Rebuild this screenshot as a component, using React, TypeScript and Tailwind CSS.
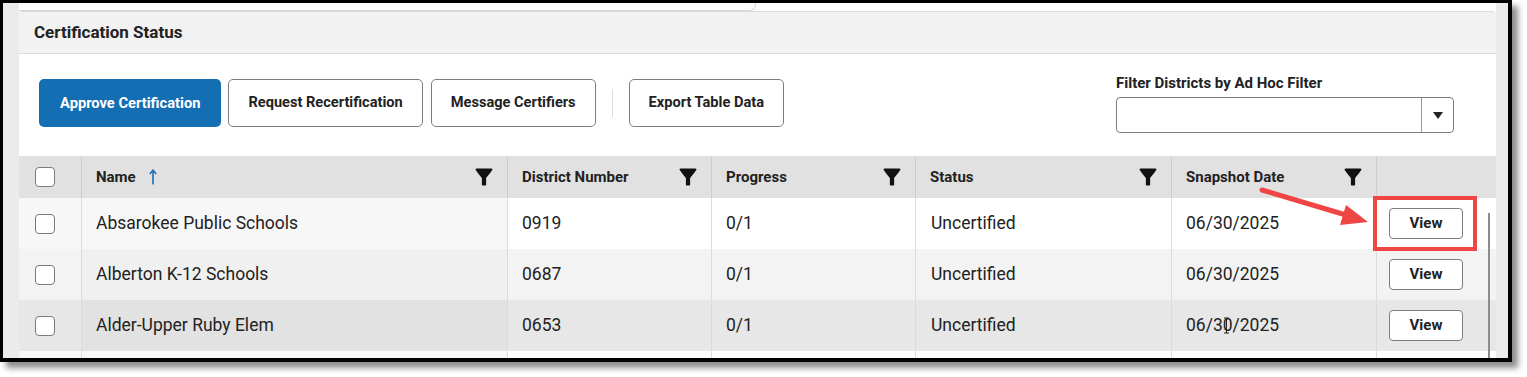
import React from "react";

type Row = {
  name: string;
  number: string;
  progress: string;
  status: string;
  date: string;
};

const rows: Row[] = [
  { name: "Absarokee Public Schools", number: "0919", progress: "0/1", status: "Uncertified", date: "06/30/2025" },
  { name: "Alberton K-12 Schools", number: "0687", progress: "0/1", status: "Uncertified", date: "06/30/2025" },
  { name: "Alder-Upper Ruby Elem", number: "0653", progress: "0/1", status: "Uncertified", date: "06/30/2025" },
  { name: "", number: "", progress: "", status: "", date: "" },
];

// row tints: [checkbox col, name col (sorted), other cols]
const rowTints = [
  ["bg-[#f7f7f7]", "bg-[#f7f7f7]", "bg-white"],
  ["bg-[#f3f3f3]", "bg-[#f0f0f0]", "bg-[#f3f3f3]"],
  ["bg-[#e7e7e7]", "bg-[#e2e2e2]", "bg-[#e7e7e7]"],
  ["bg-[#f7f7f7]", "bg-[#f7f7f7]", "bg-white"],
];

const cols = "grid grid-cols-[62px_426px_204px_204px_256px_205px_120px]";

function Funnel() {
  return (
    <svg width="18" height="18" viewBox="3.5 3.5 17 17" className="shrink-0">
      <path
        d="M4.25 5.61C6.27 8.2 10 13 10 13v6c0 .55.45 1 1 1h2c.55 0 1-.45 1-1v-6s3.72-4.8 5.74-7.39A.998.998 0 0 0 18.95 4H5.04c-.83 0-1.3.95-.79 1.61z"
        fill="#111"
      />
    </svg>
  );
}

function Checkbox() {
  return <div className="w-5 h-5 rounded-[4px] border border-[#7a7a7a] bg-white" />;
}

function OutlineButton({ label }: { label: string }) {
  return (
    <button className="h-12 px-[19px] rounded-[5px] border border-[#7d7d7d] bg-white text-[14.6px] font-bold text-[#222]">
      {label}
    </button>
  );
}

function HeaderCell({ label, sort }: { label: string; sort?: boolean }) {
  return (
    <div className="flex items-center justify-between pl-[14px] pr-[14px] border-l border-[#cdcdcd]">
      <div className="flex items-center gap-[13px]">
        <span className="text-[15px] font-bold text-[#222]">{label}</span>
        {sort && (
          <svg width="8" height="16" viewBox="0 0 8 16">
            <path d="M4 1.5v14" stroke="#1a6fb5" strokeWidth="1.6" />
            <path d="M0.8 5 4 1.2 7.2 5" fill="none" stroke="#1a6fb5" strokeWidth="1.6" />
          </svg>
        )}
      </div>
      <Funnel />
    </div>
  );
}

export default function App() {
  return (
    <div className="relative w-[1527px] h-[377px] bg-white font-['Roboto',sans-serif] overflow-hidden">
      <div className="w-[1512px] h-[362px] border-l-[3px] border-t-[3px] border-r-[4px] border-b-[4px] border-black shadow-[6px_6px_6px_rgba(0,0,0,0.45)] flex bg-white overflow-hidden">
        <div className="w-4 bg-[#ebebeb] shrink-0" />
        <div className="w-[1477px] shrink-0 flex flex-col">
          {/* remnant of the card above */}
          <div className="h-[8px] flex shrink-0">
            <div className="w-[737px] border-b border-r border-[#d6d6d6] rounded-br-[6px] bg-white" />
            <div className="flex-1 bg-white" />
          </div>
          {/* panel */}
          <div className="flex-1 min-h-0 border-t border-[#dcdcdc] rounded-t-[4px] flex flex-col overflow-hidden">
            <div className="h-[42px] shrink-0 bg-[#f2f2f2] border-b border-[#dcdcdc] flex items-center pl-[15px]">
              <h2 className="text-[17px] font-bold text-[#222]">Certification Status</h2>
            </div>
            <div className="h-[102px] shrink-0 bg-white flex justify-between pl-5 pr-[42px]">
              <div className="flex items-center mt-[25px] h-12">
                <button className="h-12 px-[21px] mr-[7px] rounded-[5px] bg-[#146eb4] text-[14.7px] font-bold text-white">
                  Approve Certification
                </button>
                <OutlineButton label="Request Recertification" />
                <div className="w-2" />
                <OutlineButton label="Message Certifiers" />
                <div className="w-px h-7 bg-[#dedede] mx-4" />
                <OutlineButton label="Export Table Data" />
              </div>
              <div className="flex flex-col mt-[20px]">
                <label className="text-[15px] font-bold text-[#222] leading-[18px]">
                  Filter Districts by Ad Hoc Filter
                </label>
                <div className="mt-[5px] w-[338px] h-9 rounded-[4px] border border-[#7a7a7a] bg-white flex justify-end">
                  <div className="w-8 border-l border-[#9a9a9a] flex items-center justify-center">
                    <svg width="10" height="7" viewBox="0 0 10 7">
                      <path d="M0 0h10L5 7z" fill="#222" />
                    </svg>
                  </div>
                </div>
              </div>
            </div>
            {/* table */}
            <div className={`${cols} h-[42px] shrink-0 bg-[#e1e1e1]`}>
              <div className="flex items-center pl-4">
                <Checkbox />
              </div>
              <HeaderCell label="Name" sort />
              <HeaderCell label="District Number" />
              <HeaderCell label="Progress" />
              <HeaderCell label="Status" />
              <HeaderCell label="Snapshot Date" />
              <div className="border-l border-[#cdcdcd]" />
            </div>
            <div className="relative flex-1 min-h-0">
              {rows.map((r, i) => {
                const [cb, nm, ot] = rowTints[i];
                return (
                  <div key={i} className={`${cols} h-[51px] shrink-0 text-[17.5px] text-[#222]`}>
                    <div className={`${cb} flex items-center pl-4`}>{r.name && <Checkbox />}</div>
                    <div className={`${nm} border-l border-[#dcdcdc] flex items-center pl-[14px]`}>{r.name}</div>
                    <div className={`${ot} border-l border-[#dcdcdc] flex items-center pl-[14px]`}>{r.number}</div>
                    <div className={`${ot} border-l border-[#dcdcdc] flex items-center pl-[14px]`}>{r.progress}</div>
                    <div className={`${ot} border-l border-[#dcdcdc] flex items-center pl-[15px]`}>{r.status}</div>
                    <div className={`${ot} border-l border-[#dcdcdc] flex items-center pl-[14px]`}>{r.date}</div>
                    <div className={`${ot} border-l border-[#dcdcdc] flex items-center pl-[12px]`}>
                      {r.name && (
                        <button className="w-[74px] h-[31px] rounded-[4px] border border-[#7d7d7d] bg-white text-[15px] font-bold text-[#222]">
                          View
                        </button>
                      )}
                    </div>
                  </div>
                );
              })}
              <div className="absolute right-[6px] top-[15px] bottom-0 w-[2px] bg-[#8c8c8c]" />
            </div>
          </div>
        </div>
        <div className="w-3 bg-[#ebebeb] shrink-0" />
      </div>

      {/* annotation overlay */}
      <svg className="absolute left-0 top-0 pointer-events-none" width="1527" height="377" viewBox="0 0 1527 377">
        <rect x="1375" y="198" width="100" height="51" fill="none" stroke="#f04545" strokeWidth="4" />
        <line x1="1262" y1="190" x2="1346" y2="215" stroke="#f04545" strokeWidth="5" strokeLinecap="round" />
        <polygon points="1368,222 1340,225 1346,205" fill="#f04545" />
        <path d="M1224 318h5M1224 333h5M1226.5 318v15" stroke="#222" strokeWidth="1" fill="none" />
      </svg>
    </div>
  );
}
